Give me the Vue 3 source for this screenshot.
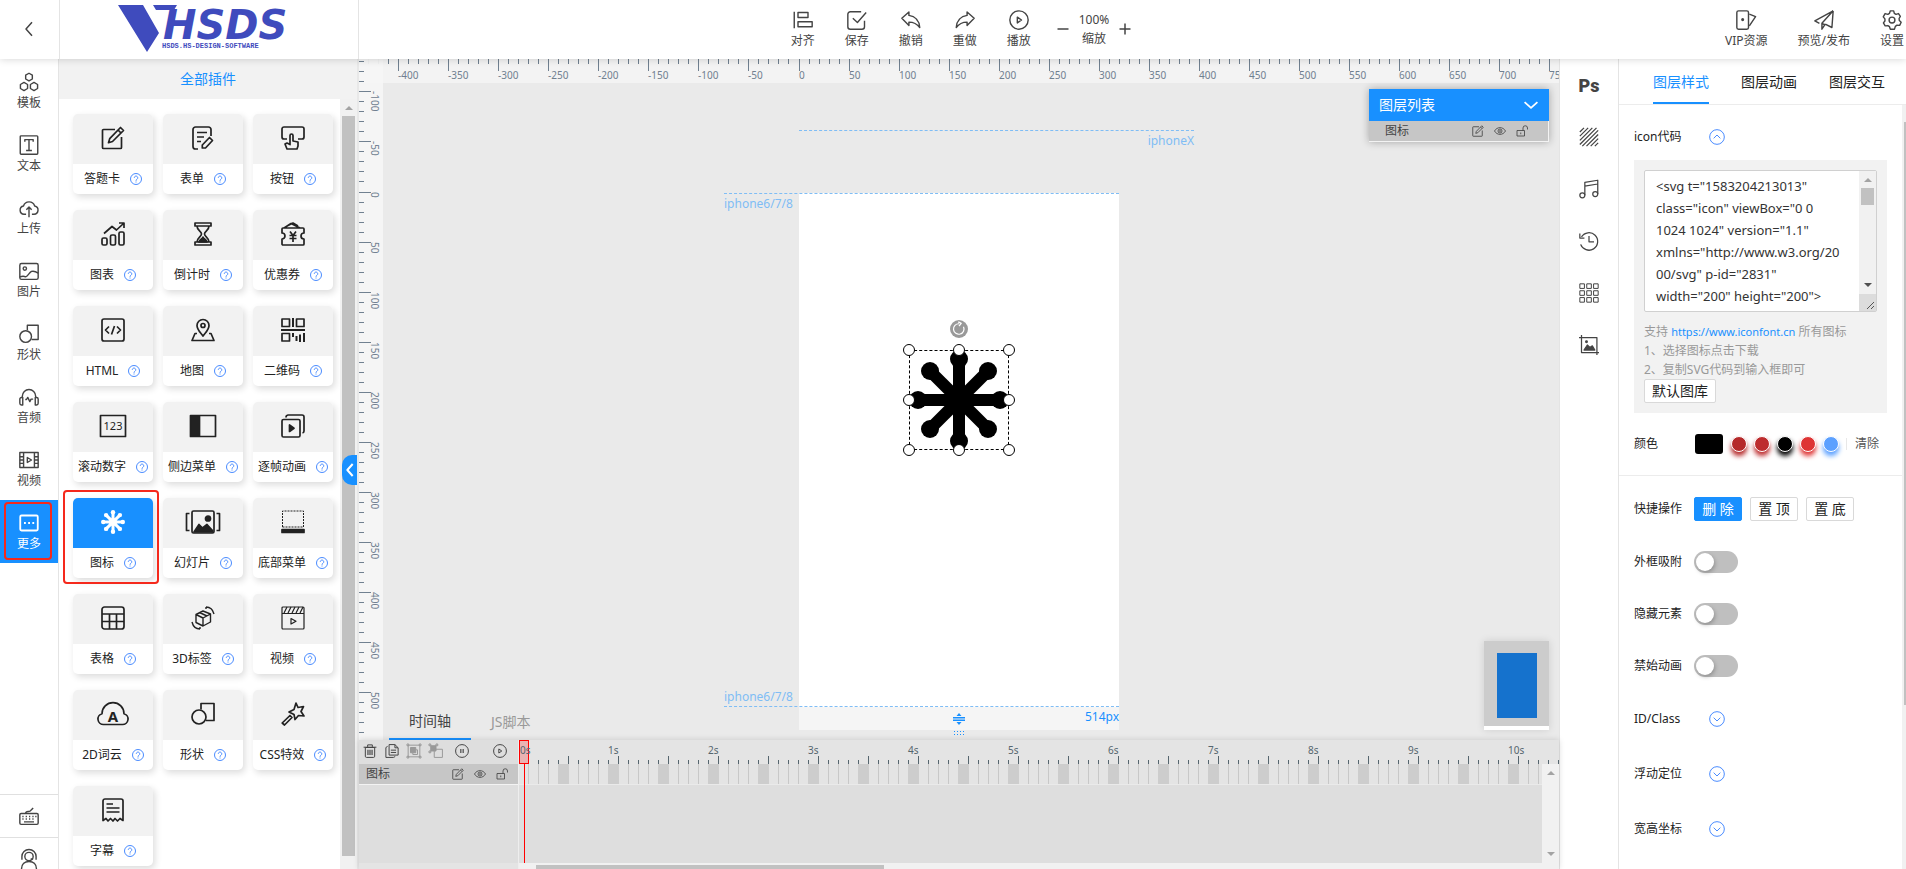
<script setup>
import { h, ref } from 'vue'

const glyphs = {
  back: '<path d="M16 3 8 12l8 9"/>',
  template: '<path d="M12 1.5l4 2.3v4.6l-4 2.3-4-2.3V3.800z"/><path d="M6 12.500l4.300 2.500v4.800L6 22.300l-4.300-2.500V15zM18 12.500l4.300 2.500v4.800L18 22.300l-4.300-2.500V15z"/>',
  text: '<rect x="1.500" y="1" width="21" height="22" rx="1"/><path d="M7 8V5.500h10V8M12 5.500v13M8.500 18.500h7"/>',
  upload: '<path d="M8.500 19.500H6a5 5 0 0 1-.6-9.900 7 7 0 0 1 13.400 0A5 5 0 0 1 18 19.500h-2.500M12 23V11M8.800 14l3.200-3.300 3.200 3.300"/>',
  image: '<rect x="1" y="3" width="22" height="19" rx="2"/><circle cx="7" cy="9" r="2"/><path d="M1 19c3-1 5-1 7 0 3-1 4-5 7-6.500 3-1 5 0 8 2"/>',
  shape: '<circle cx="8" cy="15" r="7"/><path d="M10 7.500V1.500h13v17h-8"/>',
  audio: '<path d="M4 13v-2a8 8 0 0 1 16 0v2"/><path d="M4.500 12.500v9H3a2 2 0 0 1-2-2v-5a2 2 0 0 1 2-2zM19.500 12.500v9H21a2 2 0 0 0 2-2v-5a2 2 0 0 0-2-2zM7.500 15H9l1.500-2.500 2.500 5 1.500-3H17"/>',
  video: '<rect x="1" y="3" width="22" height="18"/><path d="M5.500 3v18M18.500 3v18M1 8h4.500M1 12h4.500M1 16h4.500M18.500 8H23M18.500 12H23M18.500 16H23M10 9l5 3-5 3z"/>',
  more: '<rect x="1.500" y="3" width="21" height="18" rx="1.500" stroke-width="2.200"/><path d="M6 12h2.200M11 12h2.200M16 12h2.200" stroke-width="2.400"/>',
  keyboard: '<rect x="1" y="9" width="22" height="13" rx="1.500"/><path d="M4 12.500h1.500M8 12.500h1.500M12 12.500h1.500M16 12.500h1.500M19.500 12.500H21M4 15.500h1.500M8 15.500h1.500M12 15.500h1.500M16 15.500h1.500M6 19h12M8 9c0-4 5-1 6-3.500l3-3"/>',
  support: '<circle cx="12" cy="9" r="5"/><path d="M3.500 11V9a8.500 8.500 0 0 1 17 0v2M3.500 8v5M20.500 8v5M3 24c0-6 4-9 9-9s9 3 9 9M14 12h3"/>',
  edit: '<path d="M14 3.500H2.500a1 1 0 0 0-1 1v17a1 1 0 0 0 1 1h17a1 1 0 0 0 1-1V11M19.500 1.500l3 3L11.500 15.500l-4 1.200 1.200-4z"/><path d="m17 4 3 3"/>',
  form: '<path d="M7 23H4.500A2.500 2.500 0 0 1 2 20.500v-17A2.500 2.500 0 0 1 4.500 1h13A2.500 2.500 0 0 1 20 3.500V10M6 6.500h10M6 11h7M6 15.500h4M18.500 11.500l3 3-7 7.500h-3.200V19z"/>',
  press: '<path d="M6 13H3a2 2 0 0 1-2-2V3a2 2 0 0 1 2-2h18a2 2 0 0 1 2 2v8a2 2 0 0 1-2 2h-4M6 23l-2-5 2-1 3 1.500V9.500a1.500 1.500 0 0 1 3 0V15l5 1v4l-1 3z"/>',
  chart: '<rect x="1" y="16" width="5" height="7" rx="1.500"/><rect x="9.500" y="13" width="5" height="10" rx="1.500"/><rect x="18" y="10" width="5" height="13" rx="1.500"/><path d="m3 11.500 8-7 4.500 3.500L22.500 1.500M18 1h5v5"/>',
  hourglass: '<path d="M4 1h16v3H4zM4 20h16v3H4zM6 4c0 4.500 4.500 5.500 4.500 8S6 15.500 6 20M18 4c0 4.500-4.500 5.500-4.500 8s4.500 3.500 4.500 8"/><path d="M8 20c.5-3 4-3 4-5 0 2 3.500 2 4 5z" fill="currentColor"/>',
  coupon: '<path d="M2 6h20a1 1 0 0 1 1 1v4a3 3 0 0 0 0 6v5a1 1 0 0 1-1 1H2a1 1 0 0 1-1-1v-5a3 3 0 0 0 0-6V7a1 1 0 0 1 1-1zM3 6l7-4.500L19 6M7 3.500l5-2.500 5 3M9 9.500l3 4 3-4M12 13.500V20M8.500 13.500h7M8.500 16.500h7"/>',
  html: '<rect x="1" y="1" width="22" height="22" rx="2"/><path d="M8 8.500 4.500 12 8 15.500M16 8.500l3.500 3.500-3.500 3.500M13.500 8l-3 8.500"/>',
  map: '<path d="M12 18c-2-3-6-6-6-10.500a6 6 0 0 1 12 0C18 12 14 15 12 18z"/><circle cx="12" cy="7.500" r="2"/><path d="M6 15.500H4L1 22.500h22l-3-7h-2"/>',
  qr: '<rect x="1" y="1" width="7.500" height="7.500"/><rect x="15.500" y="1" width="7.500" height="7.500"/><rect x="1" y="15.500" width="7.500" height="7.500"/><path d="M12 0v9M0 12h24M12 15v4M15.500 18v5M19 16.500V24M23 15v9" stroke-width="2"/>',
  number: '<rect x="-.500" y="1.500" width="25" height="21"/><text x="12" y="16" text-anchor="middle" font-size="11" fill="currentColor" stroke="none">123</text>',
  sidemenu: '<rect x="-.500" y="1.500" width="25" height="21"/><path d="M0 2h8.500v20H0z" fill="currentColor"/>',
  frames: '<rect x="1" y="5.500" width="18" height="17.500" rx="1.500"/><path d="M5 3.500a2.500 2.500 0 0 1 2-2.500h14a2 2 0 0 1 2 2v14a2 2 0 0 1-1.500 2"/><path d="M8.500 11v6.500l4.500-3.300z" fill="currentColor"/>',
  star: '<path d="M12 3v18M3 12h18M5.600 5.600l12.800 12.800M18.400 5.600 5.600 18.400" stroke-width="3"/><g fill="currentColor" stroke="none"><circle cx="12" cy="2.200" r="2.200"/><circle cx="12" cy="21.800" r="2.200"/><circle cx="2.200" cy="12" r="2.200"/><circle cx="21.800" cy="12" r="2.200"/><circle cx="5.100" cy="5.100" r="2.200"/><circle cx="18.900" cy="5.100" r="2.200"/><circle cx="5.100" cy="18.900" r="2.200"/><circle cx="18.900" cy="18.900" r="2.200"/></g>',
  slides: '<rect x="1" y="1" width="22" height="22" rx="1.500"/><path d="M-1.500 3.500h-3v17h3M25.500 3.500h3v17h-3"/><circle cx="17" cy="8.500" r="2.500" fill="currentColor"/><path d="m3 22 5-7.500 3.500 3.500L16 14.500l5.500 6V22z" fill="currentColor"/>',
  bottommenu: '<path d="M1.500 17V1h21v16z" stroke-width="1" stroke-dasharray="2 1"/><path d="M1 19.500h22v3H1z" fill="currentColor"/>',
  table: '<rect x="1" y="1" width="22" height="22" rx="2.500"/><path d="M1 8h22M1 15.500h22M8.500 8v15M15.500 8v15"/>',
  cube: '<path d="M12 5l7.500 3v8L12 20l-7-3.500v-8zM5 8.500l7 3.500 7.500-4M12 12v8M8.500 6.500l7.500 3.500M15 1c4 0 7 3 8 7M1 16c1 4 4 7 8 7M15 1v2M9 23v-2" stroke-width="1.400"/>',
  clap: '<rect x="1" y="1" width="22" height="22" rx="1" stroke-width="1.200"/><path d="M1 7.500h22M3 7l3-6M7 7l3-6M11 7l3-6M15 7l3-6M19 7l3-6M10 12.500l5 2.700-5 2.800z" stroke-width="1.200"/>',
  cloud: '<path d="M2.500 22.500h19a5.500 5.500 0 0 0 1.500-10.800A11 11 0 0 0 1 11.700 5.500 5.500 0 0 0 2.500 22.500z"/><text x="12" y="20" text-anchor="middle" font-size="15" font-weight="700" fill="currentColor" stroke="none">A</text>',
  wand: '<path d="m15 1 2 4.500 5.500-1-2.500 5 3 4.500-5.500-.5-3.500 4-1-5-5-2.500 5-2.500z"/><path d="m9 13.500 2 2-7.500 7.500-2.300-2z"/>',
  subtitle: '<path d="M2 22.500V3a2 2 0 0 1 2-2h16a2 2 0 0 1 2 2v19.500l-3-2-2.500 2.500-2.500-2.500-2 2.500-2.500-2.500L7 23l-2-2.500zM5.500 6H12M5.500 10h13M5.500 14h13"/>',
  help: '<circle cx="12" cy="12" r="11"/><path d="M8.500 9.500a3.500 3.500 0 1 1 5.500 3c-1.500 1-2 1.500-2 3M12 17v2"/>',
  align: '<path d="M1.500 2v20"/><rect x="6" y="3" width="12" height="6"/><rect x="6" y="14" width="17" height="6"/>',
  save: '<path d="M17 2H4a3 3 0 0 0-3 3v15a3 3 0 0 0 3 3h14a3 3 0 0 0 3-3v-7M7 10l5.500 5L23 3"/>',
  undo: '<path d="m1 10 8.500-7.500v4C17 7.500 22 13 22.500 21c-4-5.500-8-6.500-13-6.500v4z"/>',
  redo: '<path d="m23 10-8.500-7.500v4C7 7.500 2 13 1.500 21c4-5.500 8-6.500 13-6.500v4z"/>',
  play: '<circle cx="12" cy="12" r="11"/><path d="m10 8.500 5 3.500-5 3.500z"/>',
  pause: '<circle cx="12" cy="12" r="11"/><path d="M10 8.500v7M14 8.500v7" stroke-width="2"/>',
  minus: '<path d="M1 12h22" stroke-width="3"/>',
  plus: '<path d="M1 12h22M12 1v22" stroke-width="3"/>',
  vip: '<rect x="1" y="1" width="14" height="22" rx="2"/><circle cx="8" cy="11.500" r="1" fill="currentColor"/><path d="m16 5 7.500 3L16 19"/>',
  send: '<path d="M23 1 1 13l5.500 3M23 1l-1.500 20-8-4M23 1 9.500 16v7l4-6M9.500 16l4 2"/>',
  gear: '<path d="M10 1h4l.8 3 2 1.200 3-.9 2.200 3.400-1.500 2.500.3 2.500 2.200 2-1.800 3.700-3.200-.2-2 1.500L15 23h-5l-1-3-2-1.300-3.200.3L1.700 15.500l1.800-2.300V10.600L1.500 8.200l2.200-3.900 3.300.9 2-1.200z"/><circle cx="12" cy="12" r="3.500"/>',
  eye: '<path d="M1 12c5-9 17-9 22 0-5 9-17 9-22 0z"/><circle cx="12" cy="12" r="4"/><circle cx="12" cy="12" r="1"/>',
  unlock: '<rect x="2" y="11" width="15" height="11"/><path d="M14 11V6a4.500 4.500 0 0 1 9 0v3M9.500 15v3.500"/>',
  trash: '<path d="M4 6h16v15a2 2 0 0 1-2 2H6a2 2 0 0 1-2-2zM1 5.500h22M8 5V1.500h8V5"/><path d="M8.500 10v9M12 10v9M15.500 10v9" stroke-width="2"/>',
  copy: '<path d="M7 1h10l5.500 5.500V19H7zM17 1v5.500h5.500M4.500 4 1.500 6v17h13l3-1.500M10 10.500h9M10 14.500h9"/>',
  group: '<path d="M2 2h20v20H2z"/><path d="M6 6h9v9H6z" fill="currentColor"/><path d="M10 15v3h8v-8h-3M0 0h3v3H0zM21 0h3v3h-3zM0 21h3v3H0zM21 21h3v3h-3z"/>',
  ungroup: '<path d="M3 3h9v9H3z" fill="currentColor"/><path d="M9 9h14v14H9zM0 0h3v3H0zM12 0h3v3h-3zM0 12h3v3H0z"/>',
  hatch: '<path d="M1 6 6 1M1 11 11 1M1 16 16 1M1 21 21 1M4 23 23 4M9 23 23 9M14 23l9-9M19 23l4-4"/>',
  music: '<circle cx="4" cy="19.500" r="3"/><circle cx="19.500" cy="18" r="3"/><path d="M7 19.500V4l15.500-2.500V18M7 8.500 22.500 6"/>',
  history: '<path d="M3 7a10.500 10.500 0 1 1-1 9M1 3v5.500h5.500M12 6v7h6"/>',
  grid: '<path d="M1 1h5.500v5.500H1zM9.300 1h5.500v5.500H9.300zM17.500 1H23v5.500h-5.500zM1 9.300h5.500v5.500H1zM9.300 9.300h5.500v5.500H9.300zM17.500 9.300H23v5.500h-5.500zM1 17.500h5.500V23H1zM9.300 17.500h5.500V23H9.300zM17.500 17.500H23V23h-5.500z" stroke-width="1.200"/>',
  crop: '<path d="M0 3h21.500v21M3 0v21h21"/><path d="m6 18 4-6 3 3 3-2 3 5z" fill="currentColor"/><circle cx="9" cy="8" r="1" fill="currentColor"/>',
  up: '<circle cx="12" cy="12" r="11"/><path d="m7 14 5-5 5 5"/>',
  down: '<circle cx="12" cy="12" r="11"/><path d="m7 10 5 5 5-5"/>',
  chevron: '<path d="m1 7 11 10L23 7" stroke-width="3"/>',
  rotate: '<circle cx="12" cy="12" r="12" fill="#999" stroke="none"/><path d="M18 9a7 7 0 1 1-6-4M11 2.500l4 2-3 3.500" stroke="#fff" stroke-width="1.600"/>',
  resize: '<path d="M0 9.500h24M0 14.500h24" stroke-width="3"/><path d="m7 6 5-6 5 6zM7 18l5 6 5-6z" fill="currentColor" stroke="none"/>'
}

const Icon = (props) =>
  h('svg', {
    viewBox: '0 0 24 24', width: props.size, height: props.size, overflow: 'visible',
    fill: 'none', stroke: 'currentColor', 'stroke-width': props.weight || 1.7,
    'stroke-linejoin': 'round', 'aria-hidden': 'true', innerHTML: glyphs[props.name]
  })
Icon.props = ['name', 'size', 'weight']

const nav = [
  ['template', '模板'], ['text', '文本'], ['upload', '上传'], ['image', '图片'],
  ['shape', '形状'], ['audio', '音频'], ['video', '视频'], ['more', '更多']
]
const plugins = [
  ['edit', '答题卡'], ['form', '表单'], ['press', '按钮'],
  ['chart', '图表'], ['hourglass', '倒计时'], ['coupon', '优惠券'],
  ['html', 'HTML'], ['map', '地图'], ['qr', '二维码'],
  ['number', '滚动数字'], ['sidemenu', '侧边菜单'], ['frames', '逐帧动画'],
  ['star', '图标'], ['slides', '幻灯片'], ['bottommenu', '底部菜单'],
  ['table', '表格'], ['cube', '3D标签'], ['clap', '视频'],
  ['cloud', '2D词云'], ['shape', '形状'], ['wand', 'CSS特效'],
  ['subtitle', '字幕']
]
const tools = [['align', '对齐'], ['save', '保存'], ['undo', '撤销'], ['redo', '重做'], ['play', '播放']]
const links = [['vip', 'VIP资源'], ['send', '预览/发布'], ['gear', '设置']]
const xMarks = Array.from({ length: 25 }, (_, i) => (i - 9) * 50)
const yMarks = Array.from({ length: 14 }, (_, i) => (i - 3) * 50)
const seconds = Array.from({ length: 11 }, (_, i) => i)
const side = ['hatch', 'music', 'history', 'grid', 'crop']
const dots = ['#b5292a', '#bd2c2e', '#000000', '#de3434', '#5ba0ff']
const switches = ['外框吸附', '隐藏元素', '禁始动画']
const folded = ['ID/Class', '浮动定位', '宽高坐标']
const arms = [0, 45, 90, 135, 180, 225, 270, 315]
const handles = ['nw', 'n', 'ne', 'w', 'e', 'sw', 's', 'se']
const code = ref('<svg t="1583204213013"\nclass="icon" viewBox="0 0\n1024 1024" version="1.1"\nxmlns="http://www.w3.org/20\n00/svg" p-id="2831"\nwidth="200" height="200">')
</script>

<template>
  <div class="app">
    <header class="topbar">
      <button class="back" aria-label="返回"><Icon name="back" size="18" weight="2" /></button>
      <div class="brand">
        <svg width="182" height="50" viewBox="0 0 182 50" role="img" aria-label="HSDS">
          <g fill="#3f4bbd">
            <path d="M0 0h25l16 28-12 19zM35 0h24l-3 5H38z" />
            <text class="brand-name" x="45" y="34">HSDS</text>
            <text class="brand-sub" x="44" y="43">HSDS.HS-DESIGN-SOFTWARE</text>
          </g>
        </svg>
      </div>
      <div class="tools">
        <button v-for="t in tools" :key="t[0]" class="tool"><Icon :name="t[0]" size="20" /><span>{{ t[1] }}</span></button>
        <div class="zoom">
          <button aria-label="缩小"><Icon name="minus" size="12" /></button>
          <div class="zoom-value"><span>100%</span><span>缩放</span></div>
          <button aria-label="放大"><Icon name="plus" size="12" /></button>
        </div>
      </div>
      <div class="links">
        <button v-for="t in links" :key="t[0]" class="tool"><Icon :name="t[0]" size="20" /><span>{{ t[1] }}</span></button>
      </div>
    </header>

    <div class="main">
      <nav class="nav">
        <button v-for="n in nav" :key="n[0]" class="nav-item" :class="{ active: n[0] === 'more' }">
          <Icon :name="n[0]" size="20" /><span>{{ n[1] }}</span>
        </button>
        <div class="nav-foot">
          <button aria-label="快捷键"><Icon name="keyboard" size="20" /></button>
          <button aria-label="客服"><Icon name="support" size="20" /></button>
        </div>
      </nav>

      <section class="plugins">
        <h2>全部插件</h2>
        <div class="plugin-body">
          <div class="cards">
            <button v-for="p in plugins" :key="p[1] + p[0]" class="card" :class="{ active: p[0] === 'star' }">
              <span class="card-icon"><Icon :name="p[0]" :size="24" /></span>
              <span class="card-label">{{ p[1] }}<Icon class="help" name="help" size="12" weight="2" /></span>
            </button>
          </div>
          <div class="vbar"><i class="arrow-up"></i><i class="thumb"></i></div>
        </div>
        <button class="collapse" aria-label="收起"><Icon name="back" size="16" weight="3" /></button>
      </section>

      <main class="work">
        <div class="stage">
          <div class="ruler-x"><span v-for="m in xMarks" :key="m" :class="{ zero: m === 0 }">{{ m < -400 ? '' : m }}</span></div>
          <div class="ruler-y"><span v-for="m in yMarks" :key="m" :class="{ zero: m === 0 }">{{ m < -100 ? '' : m }}</span></div>

          <div class="guide guide-x"><span>iphoneX</span></div>
          <div class="page">
            <div class="page-foot"><Icon name="resize" size="12" /><span>514px</span></div>
            <div class="guide guide-top"><span>iphone6/7/8</span></div>
            <div class="guide guide-bottom"><span>iphone6/7/8</span></div>
            <div class="selection">
              <svg viewBox="-50 -50 100 100" width="100" height="100">
                <g v-for="a in arms" :key="a" :transform="`rotate(${a})`"><path d="M-6 0h12v-40h-12z" /><circle cy="-41" r="9" /></g>
              </svg>
              <i v-for="p in handles" :key="p" class="handle" :class="p"></i>
              <Icon class="rotate" name="rotate" size="18" />
            </div>
          </div>
          <div class="drag"></div>

          <div class="layers">
            <div class="layers-head">图层列表<Icon name="chevron" size="14" /></div>
            <div class="layer-row"><span>图标</span><Icon name="edit" size="12" /><Icon name="eye" size="12" /><Icon name="unlock" size="12" /></div>
          </div>
          <div class="minimap"><i></i></div>
          <div class="tabs">
            <button class="on">时间轴</button>
            <button>JS脚本</button>
          </div>
        </div>

        <div class="timeline">
          <div class="tl-left">
            <div class="tl-tools">
              <button aria-label="删除"><Icon name="trash" size="14" /></button>
              <button aria-label="复制"><Icon name="copy" size="14" /></button>
              <button aria-label="组合" class="dim"><Icon name="group" size="14" /></button>
              <button aria-label="取消组合" class="dim"><Icon name="ungroup" size="14" /></button>
              <button aria-label="暂停"><Icon name="pause" size="14" /></button>
              <button aria-label="播放动画" class="run"><Icon name="play" size="14" /></button>
            </div>
            <div class="layer-row"><span>图标</span><Icon name="edit" size="12" /><Icon name="eye" size="12" /><Icon name="unlock" size="12" /></div>
            <div class="tl-fill"></div>
            <div class="tl-end"></div>
          </div>
          <div class="tl-right">
            <div class="tl-ruler"><span v-for="s in seconds" :key="s">{{ s ? s + 's' : '' }}</span></div>
            <div class="tl-body">
              <div class="tl-track"><div class="tl-frames"></div></div>
              <div class="vbar tl-vbar"><i class="arrow-up"></i><i class="arrow-down"></i></div>
            </div>
            <div class="hbar"><i></i></div>
            <div class="playhead">0s</div>
          </div>
        </div>
      </main>

      <aside class="side">
        <button class="ps">Ps</button>
        <button v-for="s in side" :key="s" :aria-label="s"><Icon :name="s" size="20" weight="1.500" /></button>
      </aside>

      <aside class="props">
        <div class="prop-tabs"><button class="on">图层样式</button><button>图层动画</button><button>图层交互</button></div>
        <div class="prop-wrap">
          <div class="prop-body">
            <div class="row row-code"><label for="code">icon代码</label><button class="fold" aria-label="收起代码"><Icon name="up" size="16" weight="1.500" /></button></div>
            <div class="codebox">
              <div class="area">
                <textarea id="code" v-model="code" spellcheck="false"></textarea>
                <div class="area-bar"><i class="arrow-up"></i><i class="area-thumb"></i><i class="arrow-down dark"></i><svg width="17" height="17" viewBox="0 0 17 17"><path d="M8 15l7-7M12 15l3-3" stroke="#555" /></svg></div>
              </div>
              <p>支持 <a href="#">https://www.iconfont.cn</a> 所有图标<br />1、选择图标点击下载<br />2、复制SVG代码到输入框即可</p>
              <button class="btn">默认图库</button>
            </div>
            <div class="row row-color">
              <span class="name">颜色</span>
              <button class="swatch" aria-label="当前颜色"></button>
              <button v-for="(d, i) in dots" :key="i" class="dot" :style="{ '--c': d }" :aria-label="d"></button>
              <button class="clear">清除</button>
            </div>
            <div class="row row-ops">
              <span class="name">快捷操作</span>
              <button class="btn primary">删 除</button><button class="btn">置 顶</button><button class="btn">置 底</button>
            </div>
            <div v-for="(s, i) in switches" :key="s" class="row row-switch">
              <label class="name" :for="'sw' + i">{{ s }}</label><input :id="'sw' + i" type="checkbox" role="switch" />
            </div>
            <div v-for="f in folded" :key="f" class="row row-fold">
              <span class="name">{{ f }}</span><button class="fold" :aria-label="f"><Icon name="down" size="16" weight="1.500" /></button>
            </div>
          </div>
          <div class="prop-bar"><i></i></div>
        </div>
      </aside>
    </div>
  </div>
</template>

<style>
body { margin: 0; overflow: hidden; }
</style>

<style scoped>
.app {
  height: 100vh; display: flex; flex-direction: column; overflow: hidden;
  font: 12px/16px "Noto Sans", "Noto Sans CJK SC", sans-serif; color: #222; background: #fff;
}
.app *, .app *::before, .app *::after { box-sizing: border-box; }
button { font: inherit; color: inherit; border: 0; padding: 0; background: none; cursor: pointer; white-space: nowrap; }
svg { display: block; flex: none; }
svg text { font-family: "Noto Sans", sans-serif; }

.topbar { height: 59px; flex: none; display: flex; background: #fff; box-shadow: 0 0 8px rgba(0, 0, 0, .18); position: relative; z-index: 5; color: #444; }
.back { width: 60px; border-right: 1px solid #e4e4e4; display: flex; align-items: center; justify-content: center; padding: 0 2px 2px 0; }
.brand { width: 299px; border-right: 1px solid #e4e4e4; display: flex; justify-content: center; padding-top: 5px; }
svg .brand-name { font: italic 900 40px "DejaVu Sans", sans-serif; }
svg .brand-sub { font: 700 7px "Liberation Mono", monospace; }
.tools { flex: 1; display: flex; justify-content: center; gap: 30px; padding-top: 10px; }
.links { width: 343px; display: flex; justify-content: flex-end; gap: 30px; padding: 10px 2px 0 0; }
.tool { display: flex; flex-direction: column; align-items: center; gap: 3px; }
.zoom { display: flex; gap: 10px; height: 38px; align-items: center; margin-left: -4px; }
.zoom-value { display: flex; flex-direction: column; align-items: center; line-height: 19px; }

.main { flex: 1; min-height: 0; display: flex; }
.nav { width: 59px; flex: none; border-right: 1px solid #e4e4e4; display: flex; flex-direction: column; color: #444; }
.nav-item { height: 63px; flex: none; display: flex; flex-direction: column; align-items: center; gap: 3px; padding-top: 13px; position: relative; }
.nav-item.active { background: #1890ff; color: #fff; }
.nav-item.active::after { content: ""; position: absolute; inset: 2px 6px 3px 4px; border: 2px solid #f5291c; border-radius: 4px; }
.nav-foot { margin-top: auto; height: 75px; overflow: hidden; flex: none; }
.nav-foot button { width: 100%; height: 43px; border-top: 1px solid #e0e0e0; display: flex; align-items: center; justify-content: center; }

.plugins { width: 300px; flex: none; display: flex; flex-direction: column; position: relative; border-right: 2px solid #e8e8e8; }
.plugins h2 { margin: 0; height: 40px; flex: none; background: #f2f2f2; color: #1890ff; font-size: 14px; font-weight: 400; line-height: 40px; text-align: center; }
.plugin-body { flex: 1; min-height: 0; display: flex; overflow: hidden; }
.cards { flex: 1; display: grid; grid-template-columns: repeat(3, 80px); grid-auto-rows: 80px; gap: 16px 10px; padding: 15px 0 0 14px; }
.card { display: flex; flex-direction: column; border-radius: 5px; box-shadow: 2px 3px 7px rgba(0, 0, 0, .14); position: relative; }
.card-icon { height: 50px; width: 100%; background: #f2f2f2; border-radius: 5px 5px 0 0; display: flex; align-items: center; justify-content: center; padding-bottom: 2px; }
.card-label { height: 30px; width: 100%; display: flex; align-items: center; justify-content: center; gap: 10px; }
.help { color: #4a8cff; }
.card.active .card-icon { background: #1890ff; color: #fff; }
.card.active::after { content: ""; position: absolute; inset: -8px -6px -6px -10px; border: 2px solid #f5291c; border-radius: 4px; }
.vbar { width: 17px; flex: none; background: #f1f1f1; display: flex; flex-direction: column; align-items: center; justify-content: space-between; padding-top: 7px; }
.arrow-up, .arrow-down { border: 4px solid transparent; flex: none; }
.arrow-up { border-top: 0; border-bottom-color: #a3a3a3; }
.arrow-down { border-bottom: 0; border-top-color: #a3a3a3; }
.arrow-down.dark { border-top-color: #505050; }
.thumb { flex: 1; width: 13px; background: #c1c1c1; margin: 6px 0 13px; }
.collapse { position: absolute; right: 0; top: 396px; width: 15px; height: 30px; border-radius: 10px 0 0 10px; background: #1890ff; color: #fff; display: flex; align-items: center; justify-content: center; }

.work { flex: 1; min-width: 0; display: flex; flex-direction: column; }
.stage { flex: 1; min-height: 0; position: relative; overflow: hidden; background: #eaeaea; }
.ruler-x, .ruler-y { position: absolute; left: 0; top: 0; display: flex; overflow: hidden; background: #f3f3f3; font-size: 10px; line-height: 12px; color: #708090; }
.ruler-x { right: 0; height: 24px; }
.ruler-y { bottom: 0; width: 24px; flex-direction: column; background: rgba(245, 245, 245, .95); }
.ruler-x span {
  flex: none; width: 50px; height: 24px; padding-top: 10px;
  background: linear-gradient(#708090, #708090) 0 0 / 1px 12px no-repeat, linear-gradient(90deg, #708090 1px, transparent 1px) 0 0 / 10px 5px repeat-x;
}
.ruler-x span:first-child { margin-left: -11px; }
.ruler-x .zero { margin-left: 1px; }
.ruler-y span {
  flex: none; height: 50px; width: 24px; writing-mode: vertical-rl; padding-right: 2px;
  background: linear-gradient(#708090, #708090) 0 0 / 12px 1px no-repeat, linear-gradient(#708090 1px, transparent 1px) 0 0 / 5px 10px repeat-y;
}
.ruler-y span:first-child { margin-top: -18px; }
.ruler-y .zero { margin-top: 1px; }

.page { position: absolute; left: calc(50% - 160px); top: 134px; width: 320px; height: 514px; background: #fff; }
.guide { position: absolute; color: #7fbdf5; border: 0 dashed #7fbdf5; }
.guide span { display: block; line-height: 20px; }
.guide-x { left: calc(50% - 160px); top: 71px; width: 395px; border-top-width: 1px; text-align: right; }
.guide-top { right: 0; top: 0; width: 395px; border-top-width: 1px; }
.guide-bottom { right: 0; bottom: 0; width: 395px; border-bottom-width: 1px; }
.guide-bottom span { line-height: 18px; }
.page-foot { position: absolute; top: 100%; left: 0; width: 100%; height: 23px; background: #f5f5f5; color: #1890ff; display: flex; align-items: center; justify-content: center; }
.page-foot span { position: absolute; right: 0; top: 2px; }
.drag { position: absolute; left: calc(50% - 6px); top: 671px; width: 12px; height: 6px; background: radial-gradient(#1890ff 1px, transparent 1px) 0 0 / 3px 3px; }
.selection { position: absolute; left: 110px; top: 157px; width: 100px; height: 100px; }
.selection::before { content: ""; position: absolute; inset: 0; border: 1px dashed #000; }
.handle { position: absolute; width: 12px; height: 12px; margin: -6px; border: 1px solid #000; border-radius: 50%; background: #fff; left: 50%; top: 50%; }
.nw, .w, .sw { left: 0; }
.ne, .e, .se { left: 100%; }
.nw, .n, .ne { top: 0; }
.sw, .s, .se { top: 100%; }
.rotate { position: absolute; left: 41px; top: -30px; }

.layers { position: absolute; right: 10px; top: 30px; width: 180px; box-shadow: 0 0 8px rgba(0, 0, 0, .3); }
.layers-head { height: 32px; background: #1890ff; color: #fff; font-size: 14px; display: flex; align-items: center; justify-content: space-between; padding: 0 11px 0 10px; }
.layer-row { height: 21px; background: #c6c6c6; border-bottom: 1px solid #f3f3f3; display: flex; align-items: center; gap: 10px; color: #444; padding: 0 10px 0 7px; }
.layer-row span { margin-right: auto; }
.layers .layer-row { padding: 0 20px 0 16px; border-right: 1px solid #f3f3f3; }
.minimap { position: absolute; right: 10px; bottom: 10px; width: 65px; height: 89px; background: #ccc; border-bottom: 4px solid #fff; padding: 12px 12px 8px 13px; box-shadow: 0 0 8px rgba(0, 0, 0, .12); }
.minimap i { display: block; height: 65px; background: #1572cd; }
.tabs { position: absolute; left: 30px; bottom: 0; height: 36px; display: flex; font-size: 14px; color: #999; }
.tabs button { padding: 0 20px; }
.tabs .on { color: #444; border-bottom: 2px solid #1890ff; }

.timeline { height: 129px; flex: none; display: flex; position: relative; background: #dedede; box-shadow: 0 0 6px rgba(0, 0, 0, .15); color: #56666f; }
.tl-left { width: 159px; flex: none; display: flex; flex-direction: column; }
.tl-tools { height: 24px; display: flex; align-items: center; gap: 8px; padding: 0 11px 2px 4px; color: #444; }
.tl-tools button:nth-child(5) { margin-left: 4px; }
.tl-tools .dim { color: #999; }
.tl-tools .run { margin-left: auto; }
.tl-fill { flex: 1; }
.tl-end { height: 6px; background: #e4e4e4; }
.tl-right { flex: 1; min-width: 0; display: flex; flex-direction: column; position: relative; border-left: 1px solid #eee; }
.tl-ruler { height: 24px; display: flex; overflow: hidden; background: #e4e4e4; font-size: 10px; line-height: 20px; }
.tl-ruler span {
  flex: none; width: 100px;
  background: linear-gradient(90deg, #56666f 1px, transparent 1px) 10px 100% / 50px 8px repeat-x, linear-gradient(90deg, #56666f 1px, transparent 1px) 0 100% / 10px 4px repeat-x;
}
.tl-ruler span:first-child { margin-left: -11px; }
.tl-body { flex: 1; min-height: 0; display: flex; }
.tl-track { flex: 1; }
.tl-frames {
  height: 21px; border-bottom: 1px solid #eaeaea;
  background: linear-gradient(90deg, #cdcdcd 11px, transparent 11px) 39px 0 / 50px 100%, linear-gradient(90deg, #c8c8c8 1px, transparent 1px) -1px 0 / 10px 100%, #e4e4e4;
}
.tl-vbar { padding: 7px 0; }
.hbar { height: 6px; background: #f1f1f1; padding: 2px 0 0 17px; }
.hbar i { display: block; height: 4px; width: 34%; background: #c1c1c1; }
.playhead { position: absolute; left: 0; top: 0; width: 10px; height: 24px; border: 1px solid #f00; background: rgba(255, 0, 0, .22); font-size: 10px; line-height: 18px; }
.playhead::after { content: ""; position: absolute; left: 4px; top: 23px; width: 1px; height: 99px; background: #f00; }

.side { width: 60px; flex: none; border: solid #e4e4e4; border-width: 0 1px; display: flex; flex-direction: column; color: #444; }
.side button { height: 52px; display: flex; align-items: center; justify-content: center; }
.side .ps { font: 900 18px Roboto, sans-serif; }

.props { width: 287px; flex: none; display: flex; flex-direction: column; }
.prop-tabs { height: 46px; flex: none; display: flex; gap: 32px; padding-left: 34px; border-bottom: 1px solid #ececec; font-size: 14px; }
.prop-tabs .on { color: #1890ff; box-shadow: inset 0 -2px #1890ff; }
.prop-wrap { flex: 1; min-height: 0; display: flex; }
.prop-body { flex: 1; overflow: hidden; }
.prop-bar { width: 4px; background: #f1f1f1; padding: 17px 0 0 2px; }
.prop-bar i { display: block; height: 78%; background: #c1c1c1; }
.row { display: flex; align-items: center; padding-left: 15px; }
.name { width: 60px; flex: none; }
.row-code { height: 55px; padding-top: 9px; }
.row-code label { width: 75px; }
.fold { color: #4a8cff; }
.codebox { margin: 0 15px; padding: 10px; background: #f2f2f2; }
.area { height: 142px; display: flex; border: 1px solid #d0d0d0; border-radius: 2px; background: #fff; }
textarea { flex: 1; min-width: 0; border: 0; outline: 0; padding: 4px 0 0 11px; resize: none; overflow: hidden; white-space: pre; background: none; color: #333; font: 13px/22px "Noto Sans", "Noto Sans CJK SC", sans-serif; }
.area-bar { width: 17px; background: #f1f1f1; display: flex; flex-direction: column; align-items: center; padding-top: 7px; }
.area-thumb { width: 13px; height: 17px; background: #c1c1c1; margin: 6px 0 auto; }
.area-bar svg { background: #dcdcdc; margin-top: 7px; }
.codebox p { margin: 10px 0 0; line-height: 19px; color: #999; }
.codebox a { color: #1890ff; text-decoration: none; font-size: 11px; }
.btn { height: 24px; padding: 0 7px; display: block; border: 1px solid #d9d9d9; border-radius: 2px; background: #fff; font-size: 14px; line-height: 20px; color: #222; }
.primary { background: #1890ff; border-color: #1890ff; color: #fff; }
.row-color { height: 63px; border-bottom: 1px solid #ececec; }
.swatch { width: 28px; height: 20px; border-radius: 3px; background: #000; margin: 0 8px 0 1px; }
.dot { width: 16px; height: 16px; flex: none; margin-right: 7px; border: 1px solid #fff; border-radius: 50%; background: var(--c); box-shadow: 0 4px 5px var(--c); }
.clear { border-left: 1px solid #e8e8e8; line-height: 12px; padding-left: 8px; color: #555; }
.row-ops { height: 65px; gap: 8px; }
.row-ops .name { width: 52px; }
.row-ops .btn { width: 48px; padding: 0; }
.row-switch { height: 52px; padding-bottom: 10px; }
input { appearance: none; margin: 0; width: 44px; height: 22px; border-radius: 11px; background: #bfbfbf; padding: 2px; }
input::before { content: ""; display: block; width: 18px; height: 18px; border-radius: 50%; background: #fff; box-shadow: 1px 2px 4px rgba(0, 0, 0, .25); }
.row-fold { height: 55px; padding-bottom: 12px; }
.row-fold .name { width: 75px; }
</style>
